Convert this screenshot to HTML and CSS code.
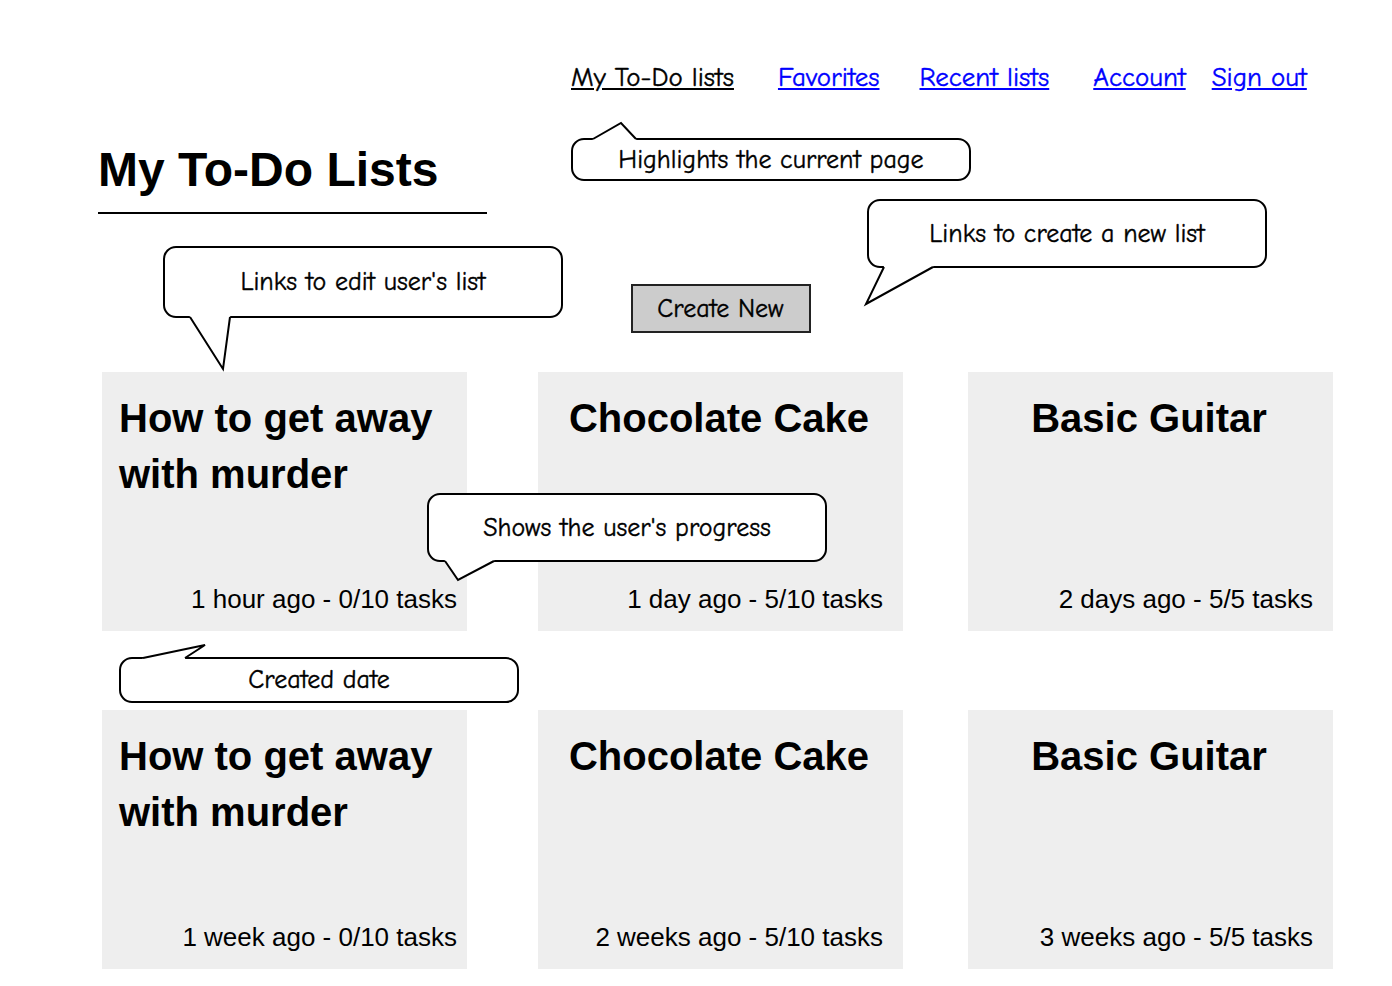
FILE: index.html
```html
<!DOCTYPE html>
<html lang="en">
<head>
    <meta charset="UTF-8">
    <meta name="viewport" content="width=device-width, initial-scale=1.0">
    <title>My To-Do Lists</title>
    <link rel="stylesheet" href="styles.css">
</head>
<body>
<div class="page">
    <header class="topbar">
        <nav class="nav">
            <a href="#" class="nav-link current">My To-Do lists</a>
            <a href="#" class="nav-link">Favorites</a>
            <a href="#" class="nav-link">Recent lists</a>
            <a href="#" class="nav-link nav-account">Account</a>
            <a href="#" class="nav-link nav-signout">Sign out</a>
        </nav>
    </header>

    <div class="page-head">
        <h1>My To-Do Lists</h1>
    </div>

    <div class="grid toolbar">
        <div></div>
        <div class="toolbar-center">
            <button class="btn-create">Create New</button>
        </div>
        <div></div>
    </div>

    <main class="grid lists">
        <a href="#" class="card card--left">
            <h2 class="card-title">How to get away with murder</h2>
            <p class="card-meta">1 hour ago - 0/10 tasks</p>
        </a>
        <a href="#" class="card">
            <h2 class="card-title">Chocolate Cake</h2>
            <p class="card-meta">1 day ago - 5/10 tasks</p>
        </a>
        <a href="#" class="card">
            <h2 class="card-title">Basic Guitar</h2>
            <p class="card-meta">2 days ago - 5/5 tasks</p>
        </a>
        <a href="#" class="card card--left">
            <h2 class="card-title">How to get away with murder</h2>
            <p class="card-meta">1 week ago - 0/10 tasks</p>
        </a>
        <a href="#" class="card">
            <h2 class="card-title">Chocolate Cake</h2>
            <p class="card-meta">2 weeks ago - 5/10 tasks</p>
        </a>
        <a href="#" class="card">
            <h2 class="card-title">Basic Guitar</h2>
            <p class="card-meta">3 weeks ago - 5/5 tasks</p>
        </a>
    </main>

    <!-- note bubbles over the wireframe -->
    <div class="note note-current">
        <svg class="note-tail" width="400" height="43">
            <polygon points="21,4 22,1 50,-15 65,1 66,4" fill="#fff"/>
            <polyline points="22,1 50,-15 65,1"/>
        </svg>
        Highlights the current page
    </div>

    <div class="note note-create">
        <svg class="note-tail" width="400" height="69">
            <polygon points="16,65 17,68 -1,105 66,68 67,65" fill="#fff"/>
            <polyline points="17,68 -1,105 66,68"/>
        </svg>
        Links to create a new list
    </div>

    <div class="note note-edit">
        <svg class="note-tail" width="400" height="72">
            <polygon points="26,68 27,71 60,123 67,71 68,68" fill="#fff"/>
            <polyline points="27,71 60,123 67,71"/>
        </svg>
        Links to edit user's list
    </div>

    <div class="note note-progress">
        <svg class="note-tail" width="400" height="69">
            <polygon points="17,65 18,68 31,87 67,68 68,65" fill="#fff"/>
            <polyline points="18,68 31,87 67,68"/>
        </svg>
        Shows the user's progress
    </div>

    <div class="note note-date">
        <svg class="note-tail" width="400" height="46">
            <polygon points="23,4 24,1 86,-12 66,1 67,4" fill="#fff"/>
            <polyline points="24,1 86,-12 66,1"/>
        </svg>
        Created date
    </div>
</div>
</body>
</html>
```

FILE: styles.css
```css
body {
    margin: 0;
    background-color: #fff;
    color: #000;
    font-family: "Liberation Sans", Arial, sans-serif;
}
.page {
    position: relative;
    width: 1392px;
    min-height: 986px;
}

/* top navigation */
.topbar {
    padding: 62px 0 0 571px;
}
.nav {
    display: flex;
    align-items: baseline;
    font-family: "Comic Sans MS", "Comic Neue", Lato, sans-serif;
    font-size: 27px;
    line-height: 32px;
    -webkit-text-stroke: 0.4px;
}
.nav-link {
    color: #0000ff;
    text-decoration: underline;
    margin-right: 40px;
}
.nav-link.current {
    color: #000;
    margin-right: 44px;
}
.nav-account {
    margin-left: 4px;
    margin-right: 26px;
}

/* page title */
.page-head {
    margin: 48px 0 0 98px;
    width: 389px;
    border-bottom: 2px solid #000;
    padding-bottom: 14px;
}
.page-head h1 {
    margin: 0;
    font-size: 48px;
    line-height: 56px;
    font-weight: bold;
}

/* cards grid */
.grid {
    display: grid;
    grid-template-columns: 436px 430px 365px;
    margin-left: 102px;
}
.toolbar {
    margin-top: 70px;
}
.toolbar-center {
    width: 365px;
    display: flex;
    justify-content: center;
}
.btn-create {
    width: 180px;
    height: 49px;
    background-color: #cccccc;
    border: 2px solid #222;
    font-family: "Comic Sans MS", "Comic Neue", Lato, sans-serif;
    font-size: 26px;
    -webkit-text-stroke: 0.4px;
    color: #000;
    cursor: pointer;
}
.lists {
    margin-top: 39px;
    row-gap: 79px;
}
.card {
    display: flex;
    flex-direction: column;
    justify-content: space-between;
    width: 365px;
    height: 259px;
    box-sizing: border-box;
    padding: 18px 20px 17px 17px;
    background-color: #eeeeee;
    color: #000;
    text-decoration: none;
}
.card-title {
    margin: 0;
    font-size: 40px;
    line-height: 56px;
    font-weight: bold;
    text-align: center;
}
.card--left .card-title {
    text-align: left;
}
.card-meta {
    margin: 0;
    font-size: 26px;
    line-height: 30px;
    text-align: right;
    white-space: nowrap;
}
.card--left {
    padding-right: 10px;
}

/* callouts */
.note {
    position: absolute;
    box-sizing: border-box;
    width: 400px;
    display: flex;
    align-items: center;
    justify-content: center;
    background-color: #fff;
    border: 2px solid #000;
    border-radius: 13px;
    font-family: "Comic Sans MS", "Comic Neue", Lato, sans-serif;
    font-size: 26px;
    -webkit-text-stroke: 0.4px;
    z-index: 2;
}
.note-tail {
    position: absolute;
    left: -2px;
    top: -2px;
    overflow: visible;
}
.note-tail polyline {
    fill: none;
    stroke: #000;
    stroke-width: 2;
}
.note-current {
    left: 571px;
    top: 138px;
    height: 43px;
}
.note-create {
    left: 867px;
    top: 199px;
    height: 69px;
}
.note-edit {
    left: 163px;
    top: 246px;
    height: 72px;
}
.note-progress {
    left: 427px;
    top: 493px;
    height: 69px;
}
.note-date {
    left: 119px;
    top: 657px;
    height: 46px;
}
```
